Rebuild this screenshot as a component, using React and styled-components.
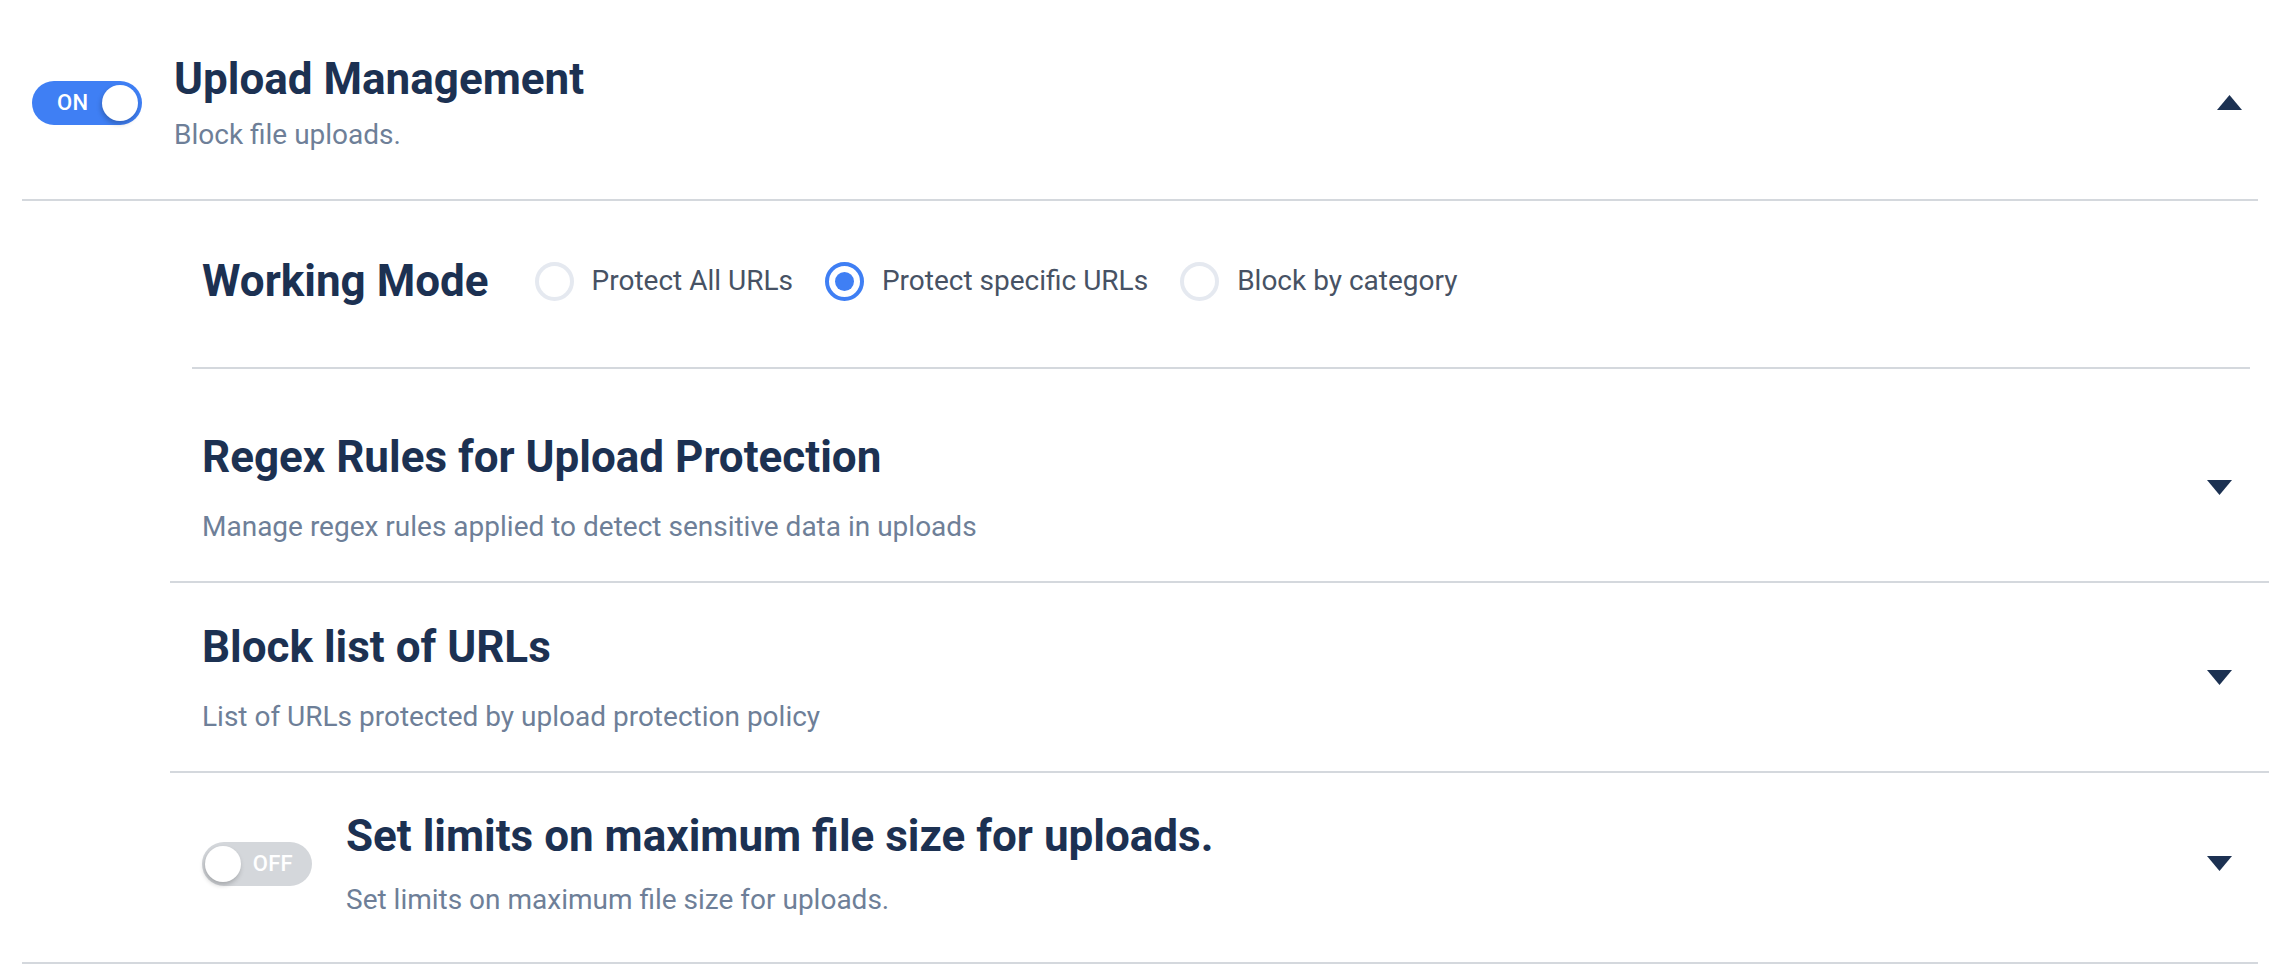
import React from 'react'
import styled, { createGlobalStyle } from 'styled-components';

const GlobalStyle = createGlobalStyle`
    html, body {
        margin: 0;
        padding: 0;
        background: #fff;
        font-family: Roboto, "Noto Sans", Arial, sans-serif;
    }
`;

const NAVY = '#1c3152';
const SLATE = '#6e7f98';
const LINE = '#d4d8dd';

const Panel = styled.div`
    margin-left: 22px;
    width: 2236px;
    border-bottom: 2px solid ${LINE};
`;

const Header = styled.div`
    display: flex;
    align-items: center;
    padding: 53px 16px 47px 10px;
    border-bottom: 2px solid ${LINE};
`;

const TextWrap = styled.div`
    flex: 1;
    display: flex;
    flex-direction: column;
    margin-left: ${({gap}) => gap ?? 32}px;
`;

const Title = styled.h2`
    margin: 0;
    font-size: 44px;
    line-height: 52px;
    font-weight: 700;
    color: ${NAVY};
`;

const Sub = styled.p`
    margin: ${({space}) => space ?? 27}px 0 0;
    font-size: 28px;
    line-height: 34px;
    color: ${SLATE};
`;

// pill switch, knob on the right when on
const Track = styled.div`
    flex: none;
    display: flex;
    flex-direction: ${({on}) => on ? 'row' : 'row-reverse'};
    justify-content: space-between;
    align-items: center;
    box-sizing: border-box;
    width: 110px;
    height: 44px;
    border-radius: 22px;
    padding: ${({on}) => on ? '0 4px 0 25px' : '0 19px 0 3px'};
    background: ${({on}) => on ? '#3f7ff4' : '#d4d7db'};
`;

const TrackLabel = styled.span`
    font-size: 22px;
    font-weight: 500;
    color: #fff;
    letter-spacing: 0.3px;
`;

const Knob = styled.span`
    width: 36px;
    height: 36px;
    border-radius: 50%;
    background: #fff;
    box-shadow: -1px 3px 5px rgba(0, 0, 0, 0.22);
`;

const Switch = ({on}) => (
    <Track on={on ? 1 : 0}>
        <TrackLabel>{on ? 'ON' : 'OFF'}</TrackLabel>
        <Knob />
    </Track>
);

const Caret = ({up}) => (
    <svg width="25" height="15" viewBox="0 0 25 15" style={{flex: 'none'}}>
        <polygon points={up ? '12.5,0 25,15 0,15' : '0,0 25,0 12.5,15'} fill={NAVY} />
    </svg>
);

const Body = styled.div`
    padding-left: 148px;
    margin-right: -11px;
`;

const ModeRow = styled.div`
    display: flex;
    align-items: center;
    margin: 0 19px 0 22px;
    padding: 54px 10px 60px;
    border-bottom: 2px solid ${LINE};
`;

const ModeTitle = styled(Title)`
    margin-right: 46px;
`;

const RadioGroup = styled.div`
    display: flex;
    align-items: center;
    gap: 32px;
`;

const RadioItem = styled.label`
    display: flex;
    align-items: center;
    gap: 18px;
    font-size: 28px;
    line-height: 40px;
    color: #475264;
`;

const RadioDot = styled.span`
    display: flex;
    align-items: center;
    justify-content: center;
    box-sizing: border-box;
    width: 39px;
    height: 39px;
    border-radius: 50%;
    border: 4px solid ${({checked}) => checked ? '#3f7ff4' : '#e5e9f0'};
    &::after {
        content: '';
        width: 19px;
        height: 19px;
        border-radius: 50%;
        background: ${({checked}) => checked ? '#3f7ff4' : 'transparent'};
    }
`;

const Sections = styled.div`
    padding-top: 24px;
`;

const Section = styled.div`
    display: flex;
    align-items: center;
    padding: ${({last}) => last ? '37px 37px 45px 32px' : '38px 37px 37px 32px'};
    border-bottom: ${({last}) => last ? 'none' : `2px solid ${LINE}`};
`;

const modes = [
    {label: 'Protect All URLs', checked: false},
    {label: 'Protect specific URLs', checked: true},
    {label: 'Block by category', checked: false},
];

const rules = [
    {
        title: 'Regex Rules for Upload Protection',
        text: 'Manage regex rules applied to detect sensitive data in uploads',
    },
    {
        title: 'Block list of URLs',
        text: 'List of URLs protected by upload protection policy',
    },
];

const App = () => {
    return (
        <>
            <GlobalStyle />
            <Panel>
                <Header>
                    <Switch on />
                    <TextWrap gap={32}>
                        <Title>Upload Management</Title>
                        <Sub space={13}>Block file uploads.</Sub>
                    </TextWrap>
                    <Caret up />
                </Header>
                <Body>
                    <ModeRow>
                        <ModeTitle>Working Mode</ModeTitle>
                        <RadioGroup>
                            {modes.map(m =>
                                <RadioItem key={m.label}>
                                    <RadioDot checked={m.checked ? 1 : 0} />
                                    {m.label}
                                </RadioItem>
                            )}
                        </RadioGroup>
                    </ModeRow>
                    <Sections>
                        {rules.map(r =>
                            <Section key={r.title}>
                                <TextWrap gap={0}>
                                    <Title>{r.title}</Title>
                                    <Sub>{r.text}</Sub>
                                </TextWrap>
                                <Caret />
                            </Section>
                        )}
                        <Section last={1}>
                            <Switch />
                            <TextWrap gap={34}>
                                <Title>Set limits on maximum file size for uploads.</Title>
                                <Sub space={21}>Set limits on maximum file size for uploads.</Sub>
                            </TextWrap>
                            <Caret />
                        </Section>
                    </Sections>
                </Body>
            </Panel>
        </>
    );
};

export default App;
